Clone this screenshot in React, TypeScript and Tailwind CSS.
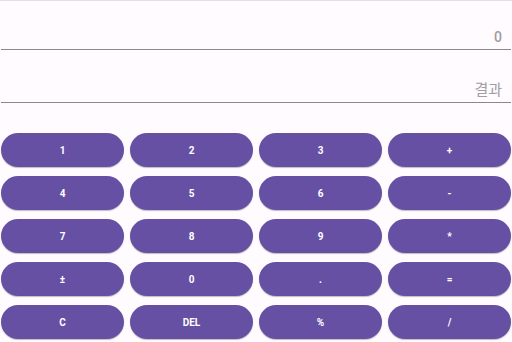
const keys = ["1", "2", "3", "+", "4", "5", "6", "-", "7", "8", "9", "*", "±", "0", ".", "=", "C", "DEL", "%", "/"];

export default function App() {
  return (
    <div
      className="w-[512px] h-[342px] overflow-hidden bg-[#fffbfe] border-t border-[#e2dfe6]"
      style={{ fontFamily: "Roboto, 'Noto Sans CJK KR', sans-serif" }}
    >
      <div className="mx-[1px] h-[49px] border-b border-[#8a8a8a] flex items-end justify-end pr-[9px] pb-[5px]">
        <span className="text-[14px] leading-none font-medium text-[#9e9ba1]">0</span>
      </div>
      <div className="mx-[1px] h-[53px] border-b border-[#8a8a8a] flex items-end justify-end pr-[9px] pb-[4px]">
        <span className="text-[15px] leading-none text-[#a09da3]">결과</span>
      </div>

      <div className="grid grid-cols-4 gap-x-[6px] gap-y-[9px] px-[1px] pt-[30px]">
        {keys.map((k) => (
          <button
            key={k}
            className="h-[34px] rounded-full bg-[#6650a4] text-white text-[10px] font-bold shadow-[0_1px_1px_rgba(0,0,0,0.25)]"
          >
            {k}
          </button>
        ))}
      </div>
    </div>
  );
}
